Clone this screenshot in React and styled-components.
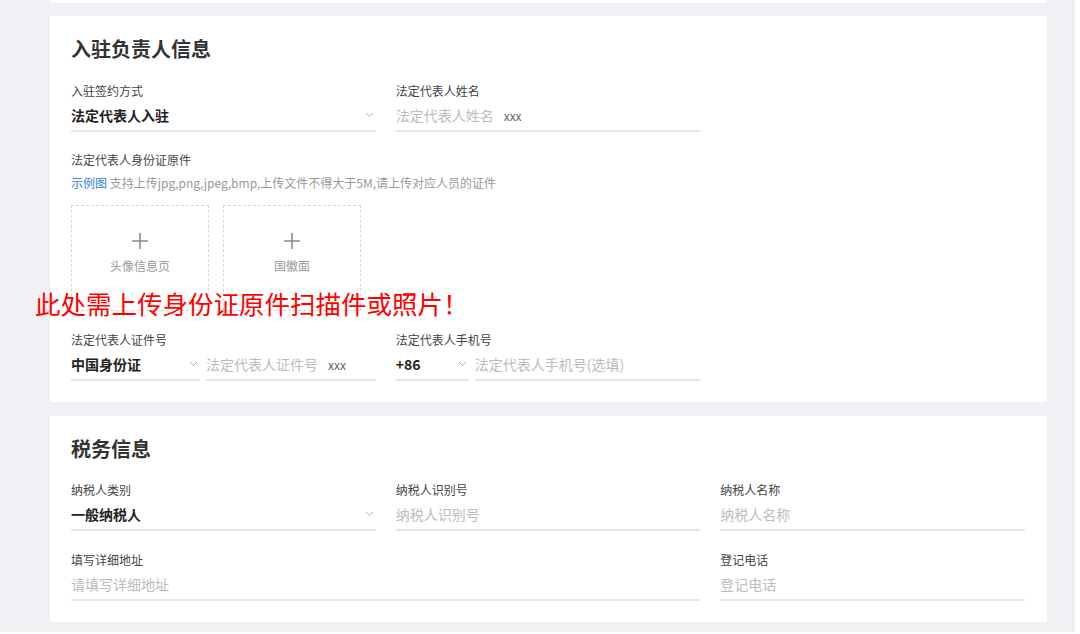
import styled, { createGlobalStyle } from 'styled-components';

const GlobalStyle = createGlobalStyle`
  html, body {
    margin: 0;
    padding: 0;
    background: #fff;
  }
  body {
    font-family: "Noto Sans CJK SC", "Noto Sans", sans-serif;
    color: #333;
  }
`;

const Chevron = () => (
  <svg width="9" height="6" viewBox="0 0 9 6" fill="none">
    <path d="M1 1l3.5 3.5L8 1" stroke="#b0b0b0" strokeWidth="1" />
  </svg>
);

const Plus = () => (
  <svg width="18" height="18" viewBox="0 0 18 18" fill="none">
    <path d="M9 1v16M1 9h16" stroke="#8c8c8c" strokeWidth="1.6" />
  </svg>
);

const Field = ({ label, value, placeholder, extra, select, span }) => (
  <FieldWrap span={span}>
    <Label>{label}</Label>
    <Control>
      {value ? <Value>{value}</Value> : <Placeholder>{placeholder}</Placeholder>}
      {extra && <Extra>{extra}</Extra>}
      {select && (
        <Arrow>
          <Chevron />
        </Arrow>
      )}
    </Control>
  </FieldWrap>
);

const App = () => {
  return (
    <>
      <GlobalStyle />
      <Page>
        <PrevCardEdge />
        <Card>
          <Title>入驻负责人信息</Title>
          <Row top={19}>
            <Field label="入驻签约方式" value="法定代表人入驻" select />
            <Field label="法定代表人姓名" placeholder="法定代表人姓名" extra="xxx" />
          </Row>
          <Section top={19}>
            <Label>法定代表人身份证原件</Label>
            <Hint>
              <HintLink>示例图</HintLink> 支持上传jpg,png,jpeg,bmp,上传文件不得大于5M,请上传对应人员的证件
            </Hint>
            <Uploads>
              <UploadBox>
                <Plus />
                <UploadText>头像信息页</UploadText>
              </UploadBox>
              <UploadBox>
                <Plus />
                <UploadText>国徽面</UploadText>
              </UploadBox>
            </Uploads>
            <Notice>此处需上传身份证原件扫描件或照片！</Notice>
          </Section>
          <Row top={20}>
            <FieldWrap>
              <Label>法定代表人证件号</Label>
              <Split>
                <Control width="129px">
                  <Value>中国身份证</Value>
                  <Arrow>
                    <Chevron />
                  </Arrow>
                </Control>
                <Control>
                  <Placeholder>法定代表人证件号</Placeholder>
                  <Extra>xxx</Extra>
                </Control>
              </Split>
            </FieldWrap>
            <FieldWrap>
              <Label>法定代表人手机号</Label>
              <Split>
                <Control width="73px">
                  <Value>+86</Value>
                  <Arrow>
                    <Chevron />
                  </Arrow>
                </Control>
                <Control>
                  <Placeholder>法定代表人手机号(选填)</Placeholder>
                </Control>
              </Split>
            </FieldWrap>
          </Row>
        </Card>

        <Card>
          <Title>税务信息</Title>
          <Row top={18}>
            <Field label="纳税人类别" value="一般纳税人" select />
            <Field label="纳税人识别号" placeholder="纳税人识别号" />
            <Field label="纳税人名称" placeholder="纳税人名称" />
          </Row>
          <Row top={20}>
            <Field label="填写详细地址" placeholder="请填写详细地址" span={2} />
            <Field label="登记电话" placeholder="登记电话" />
          </Row>
        </Card>
      </Page>
    </>
  );
};

const Page = styled.div`
  width: 1075px;
  height: 632px;
  box-sizing: border-box;
  background: #f0f1f5;
  padding: 0 28px 0 50px;
  display: flex;
  flex-direction: column;
  gap: 13px;
  overflow: hidden;
  & > div + div + div {
    margin-top: 1px;
  }
`;

const PrevCardEdge = styled.div`
  height: 3px;
  flex: none;
  background: #fff;
  margin: 0 1px;
`;

const Card = styled.div`
  position: relative;
  flex: none;
  background: #fff;
  border-radius: 2px;
  padding: 19px 22px 21px 21px;
  display: flex;
  flex-direction: column;
`;

const Title = styled.h2`
  margin: 0;
  font-size: 20px;
  line-height: 28px;
  font-weight: 700;
  color: #333;
`;

const Row = styled.div`
  margin-top: ${(p) => p.top}px;
  display: grid;
  grid-template-columns: repeat(3, 1fr);
  column-gap: 20px;
`;

const FieldWrap = styled.div`
  display: flex;
  flex-direction: column;
  grid-column: span ${(p) => p.span || 1};
`;

const Label = styled.div`
  font-size: 12px;
  line-height: 18px;
  color: #444;
`;

const Control = styled.div`
  height: 30px;
  display: flex;
  align-items: center;
  border-bottom: 2px solid #e6e6e6;
  flex: ${(p) => (p.width ? 'none' : '1 1 auto')};
  width: ${(p) => p.width || 'auto'};
  min-width: 0;
`;

const Split = styled.div`
  display: flex;
  gap: 6px;
`;

const Value = styled.span`
  font-size: 14px;
  font-weight: 700;
  color: #222;
`;

const Placeholder = styled.span`
  font-size: 14px;
  color: #bcbcbc;
`;

const Extra = styled.span`
  margin-left: 10px;
  font-size: 12px;
  color: #666;
`;

const Arrow = styled.span`
  margin-left: auto;
  margin-right: 2px;
  display: flex;
  align-items: center;
`;

const Section = styled.div`
  margin-top: ${(p) => p.top}px;
  display: flex;
  flex-direction: column;
`;

const Hint = styled.div`
  margin-top: 5px;
  font-size: 12px;
  line-height: 18px;
  color: #999;
`;

const HintLink = styled.span`
  color: #2b85e4;
`;

const Uploads = styled.div`
  margin-top: 13px;
  display: flex;
  gap: 14px;
`;

const UploadBox = styled.div`
  width: 138px;
  height: 106px;
  box-sizing: border-box;
  border: 1px dashed #d9d9d9;
  display: flex;
  flex-direction: column;
  align-items: center;
  padding-top: 26px;
  gap: 8px;
`;

const UploadText = styled.div`
  font-size: 12px;
  line-height: 16px;
  color: #999;
`;

const Notice = styled.div`
  position: absolute;
  left: -15px;
  top: 270px;
  font-size: 25.5px;
  line-height: 34px;
  color: #ff0000;
  white-space: nowrap;
`;

export default App;
